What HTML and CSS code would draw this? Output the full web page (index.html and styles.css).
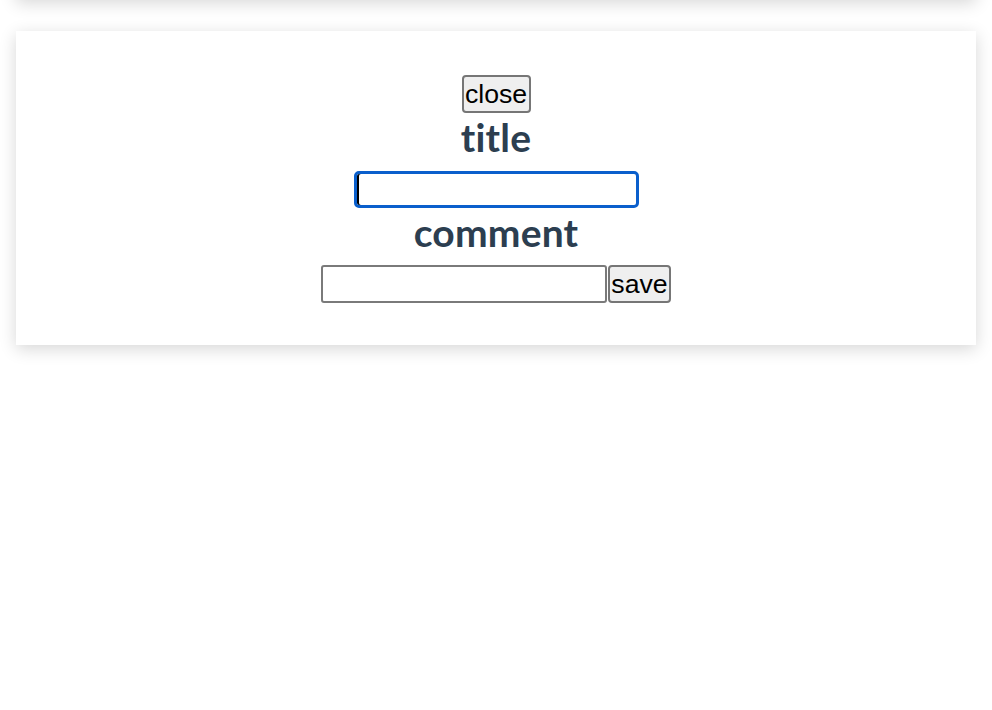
FILE: index.html
```html
<!DOCTYPE html>
<html>
<head>
<meta charset="utf-8">
<link rel="stylesheet" href="styles.css">
</head>
<body>
<div class="list">
  <div class="card card-prev"></div>
  <div class="card">
    <div class="form">
      <button class="btn btn-close">close</button>
      <h2 class="label label-title">title</h2>
      <input class="field field-focus" type="text">
      <h2 class="label label-comment">comment</h2>
      <div class="row">
        <input class="field field-comment" type="text">
        <button class="btn btn-save">save</button>
      </div>
    </div>
  </div>
</div>
</body>
</html>
```

FILE: styles.css
```css
html, body {
  margin: 0;
  padding: 0;
  background: #fff;
}
body {
  font-family: Lato, "Noto Sans", sans-serif;
  color: #2c3e50;
}
.list {
  padding: 0 16px;
}
.card {
  background: #fff;
  box-shadow: 0 4px 16px rgba(0, 0, 0, 0.16);
  margin-bottom: 32px;
}
.card-prev {
  height: 100px;
  margin-top: -101px;
}
.form {
  display: flex;
  flex-direction: column;
  align-items: center;
  padding: 44px 0 42px;
}
.btn {
  font-family: "Liberation Sans", Arial, sans-serif;
  font-size: 26.67px;
  color: #000;
  background: #efefef;
  border: 2px solid #767676;
  border-radius: 4px;
  padding: 0 1px;
  height: 38px;
  line-height: 34px;
  margin: 0;
  box-sizing: border-box;
}
.btn-close {
  width: 69px;
}
.btn-save {
  width: 63px;
}
.label {
  margin: 0;
  font-weight: 700;
  font-size: 39px;
  line-height: 48px;
  letter-spacing: 0.2px;
}
.label-title {
  padding-bottom: 10px;
}
.label-comment {
  padding-bottom: 9px;
}
.field {
  box-sizing: border-box;
  margin: 0;
  height: 37px;
  font-size: 26px;
  font-family: "Liberation Sans", Arial, sans-serif;
  padding: 0 2px;
  background: #fff;
  outline: none;
}
.field-focus {
  width: 285px;
  border: 3px solid #0a5fcc;
  border-radius: 5px;
  box-shadow: inset 2px 0 0 #000;
}
.row {
  display: flex;
  align-items: flex-start;
  gap: 1px;
}
.field-comment {
  width: 286px;
  height: 38px;
  border: 2px solid #7a7a7a;
  border-radius: 3px;
}
```
